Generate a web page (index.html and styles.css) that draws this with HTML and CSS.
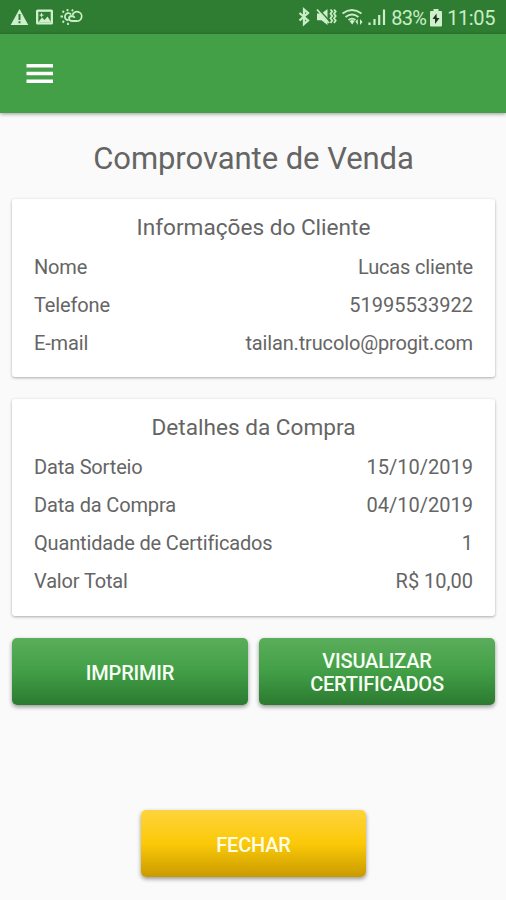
FILE: index.html
```html
<!DOCTYPE html>
<html lang="pt-BR">
<head>
<meta charset="utf-8">
<title>Comprovante de Venda</title>
<link rel="stylesheet" href="styles.css">
</head>
<body>
<div class="status">
  <svg class="icons-left" width="72" height="20" viewBox="0 0 72 20">
    <path class="fill" d="M8.500 2 17.300 18H-.3Z"/>
    <path class="cut" d="M8.500 7v6M8.500 14.300v2"/>
    <rect class="fill" x="25" y="2.500" width="17" height="15" rx="1.500"/>
    <rect class="hole" x="27.300" y="4.800" width="12.400" height="10.400"/>
    <path class="fill" d="m27.500 15 3.500-4.500 2.500 2.500 3-3.500 3.500 5.500ZM30.500 5.500l.9 1.900 1.900.6-1.900.7-.9 1.900-.8-1.900-1.700-.7 1.700-.6Z"/>
    <path class="line bold" d="M56.500 2v2.300M51.500 4l1.500 1.500M49.500 9.500h2.500M51.500 15.500l1.500-1.500M57 18v-2.300M62 2.500l-1.200 1.600"/>
    <path class="line bold" d="M57.500 13.200a3.500 3.500 0 1 1 2.600-5.700"/>
    <path class="line bold" d="M61.500 8a4.700 4.700 0 1 1 3.700 6h-4.500q-2.700-.3-2.700-2.500t2.700-2.500q2 0 3 1.800"/>
  </svg>
  <div class="status-right">
    <svg class="icons-right" width="90" height="20" viewBox="0 0 90 20">
      <path class="line heavy" d="m1.500 6 8.500 7.500-4 3.500V2.500l4 3.500-8.500 7.500"/>
      <path class="fill" d="M19 6.500h4.500l6-4.500v16l-6-4.800H19Z"/>
      <path class="slash" d="m20 1.500 11 12"/>
      <path class="line bold" d="m19 2.500 12 13.500"/>
      <path class="line bold" d="m32.500 2.500 1.700 2-1.700 2.200 1.700 2.300-1.700 2.300 1.700 2.200-1.700 2.500M36 2.500l1.700 2L36 6.700 37.700 9 36 11.300l1.700 2.200L36 16"/>
      <path class="line bold" d="M44.500 6.500q9.500-7 19 0M47.500 10q6.500-5 13 0M50.500 13q3.500-2.800 7 0"/>
      <path class="fill" d="m51.500 14 2.700-1.300 2.500 1.300-2.500 3.500ZM57.500 14.500l2.300-2.500v6ZM62 12v6l2.500-3Z"/>
      <path class="bars" d="M71.500 18v-2.500M76.500 18v-6M81.200 18V8M86 18V2.500"/>
    </svg>
    <span class="percent">83%</span>
    <svg class="battery" width="12" height="18" viewBox="0 0 12 18">
      <path class="fill" d="M3.500 0h5v2H11q1 0 1 1v13.500q0 1-1 1H1q-1 0-1-1V3q0-1 1-1h2.500Z"/>
      <path class="bolt" d="M6.500 4.500 2.500 10H5v5l4.500-6H6.800Z"/>
    </svg>
    <span class="clock">11:05</span>
  </div>
</div>
<header class="appbar">
  <svg width="27" height="20" viewBox="0 0 27 20"><path class="menu" d="M.5 1.800h26.500M.5 9.500h26.500M.5 17.300h26.500"/></svg>
</header>
<main>
  <h1>Comprovante de Venda</h1>
  <section class="card">
    <h2>Informações do Cliente</h2>
    <div class="row"><span>Nome</span><span>Lucas cliente</span></div>
    <div class="row"><span>Telefone</span><span class="num">51995533922</span></div>
    <div class="row"><span>E-mail</span><span>tailan.trucolo@progit.com</span></div>
  </section>
  <section class="card purchase">
    <h2>Detalhes da Compra</h2>
    <div class="row"><span>Data Sorteio</span><span class="num">15/10/2019</span></div>
    <div class="row"><span>Data da Compra</span><span class="num">04/10/2019</span></div>
    <div class="row"><span>Quantidade de Certificados</span><span class="num">1</span></div>
    <div class="row"><span>Valor Total</span><span class="num">R$ 10,00</span></div>
  </section>
  <div class="actions">
    <button class="btn">IMPRIMIR</button>
    <button class="btn">VISUALIZAR CERTIFICADOS</button>
  </div>
  <button class="btn close">FECHAR</button>
</main>
</body>
</html>
```
FILE: styles.css
```css
* { box-sizing: border-box; }
body {
  margin: 0;
  height: 900px;
  overflow: hidden;
  background: #fafafa;
  color: #656565;
  font-family: Roboto, "Liberation Sans", sans-serif;
}
.status {
  height: 34px;
  padding: 0 11px;
  display: flex;
  align-items: center;
  justify-content: space-between;
  background: #2e7d32;
  color: #c8eec5;
}
.status-right { display: flex; align-items: center; }
.percent, .clock { font-size: 20px; line-height: 34px; padding-top: 2px; white-space: nowrap; }
.icons-left, .icons-right { overflow: visible; }
.percent { width: 35px; margin-left: 3px; letter-spacing: -0.7px; }
.battery { margin: 2px 5px 0 4px; }
.clock { letter-spacing: -0.4px; }
.fill { fill: #d0efcc; }
.hole { fill: #2e7d32; }
.cut { stroke: #2e7d32; stroke-width: 2; }
.line { fill: none; stroke: #c8eec5; stroke-width: 1.5; }
.line.bold { stroke-width: 1.8; }
.line.heavy { stroke-width: 2.3; }
.slash { stroke: #2e7d32; stroke-width: 1.6; }
.bars { stroke: #c8eec5; stroke-width: 2.2; }
.bolt { fill: #1d3520; }
.menu { stroke: #fff; stroke-width: 3.5; }
.appbar {
  height: 79px;
  padding-left: 26px;
  display: flex;
  align-items: center;
  background: #43a047;
  box-shadow: 0 1px 4px rgba(0, 0, 0, .4);
}
main { padding: 0 11px 0 12px; }
h1 {
  margin: 0;
  height: 86px;
  padding-top: 5px;
  font-size: 31px;
  line-height: 82px;
  font-weight: 400;
  letter-spacing: -0.05px;
  text-align: center;
}
.card {
  height: 178px;
  padding: 10px 22px 0;
  margin-bottom: 22px;
  background: #fff;
  border-radius: 3px;
  box-shadow: 0 1px 3px rgba(0, 0, 0, .32);
}
.purchase { height: 217px; }
h2 {
  margin: 0 0 1px;
  font-size: 22.600px;
  line-height: 38px;
  font-weight: 400;
  text-align: center;
}
.row {
  display: flex;
  justify-content: space-between;
  font-size: 20px;
  line-height: 38px;
  letter-spacing: -0.15px;
  white-space: nowrap;
}
.num { letter-spacing: 0; }
.actions { display: grid; grid-template-columns: 1fr 1fr; gap: 11px; }
.btn {
  height: 67px;
  padding: 3px 40px 0;
  border: 0;
  border-radius: 5px;
  background: linear-gradient(#5bad5b, #43a047 48%, #2b7a30);
  box-shadow: 0 2px 4px rgba(0, 0, 0, .4);
  color: #f7fff4;
  font: 500 20px/23px Roboto, "Liberation Sans", sans-serif;
  letter-spacing: -0.2px;
}
.close {
  display: block;
  width: 225px;
  margin: 105px auto 0;
  background: linear-gradient(#ffd33d, #fbc908 50%, #c99a00);
  color: #fffde8;
}
```
